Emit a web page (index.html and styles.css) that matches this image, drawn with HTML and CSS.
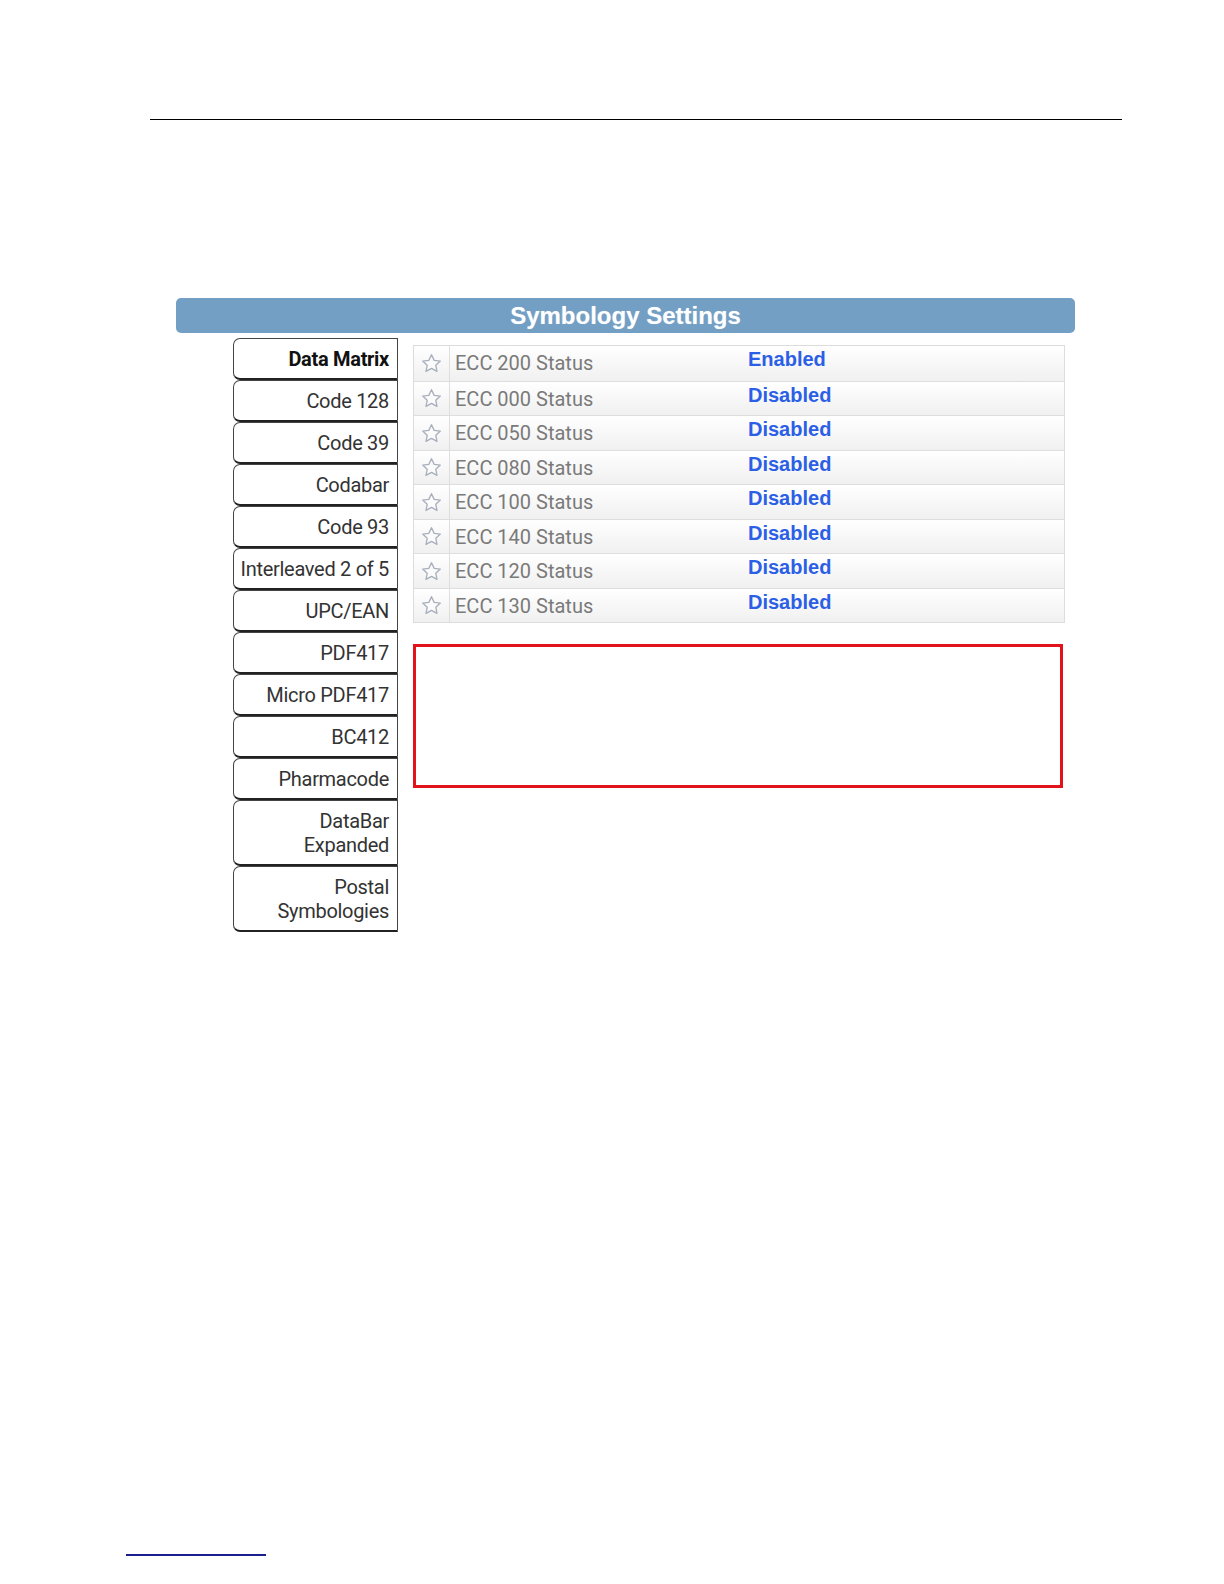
FILE: index.html
```html
<!DOCTYPE html>
<html>
<head>
<meta charset="utf-8">
<title>Symbology Settings</title>
<link rel="stylesheet" href="styles.css">
</head>
<body>
<div class="page">
  <div class="top-rule"></div>
  <section class="panel">
    <div class="header">Symbology Settings</div>
    <div class="panel-body">
      <nav class="tabs">
        <div class="tab active">Data Matrix</div>
        <div class="tab">Code 128</div>
        <div class="tab">Code 39</div>
        <div class="tab">Codabar</div>
        <div class="tab">Code 93</div>
        <div class="tab">Interleaved 2 of 5</div>
        <div class="tab">UPC/EAN</div>
        <div class="tab">PDF417</div>
        <div class="tab">Micro PDF417</div>
        <div class="tab">BC412</div>
        <div class="tab">Pharmacode</div>
        <div class="tab tall">DataBar<br>Expanded</div>
        <div class="tab tall">Postal<br>Symbologies</div>
      </nav>
      <div class="content">
        <div class="settings">
          <div class="row"><div class="star"><svg viewBox="0 0 24 24"><path d="M12 2.8l2.8 5.9 6.4.8-4.7 4.4 1.2 6.4L12 17.1l-5.7 3.2 1.2-6.4-4.7-4.4 6.4-.8z"/></svg></div><div class="label">ECC 200 Status</div><div class="value">Enabled</div></div>
          <div class="row"><div class="star"><svg viewBox="0 0 24 24"><path d="M12 2.8l2.8 5.9 6.4.8-4.7 4.4 1.2 6.4L12 17.1l-5.7 3.2 1.2-6.4-4.7-4.4 6.4-.8z"/></svg></div><div class="label">ECC 000 Status</div><div class="value">Disabled</div></div>
          <div class="row"><div class="star"><svg viewBox="0 0 24 24"><path d="M12 2.8l2.8 5.9 6.4.8-4.7 4.4 1.2 6.4L12 17.1l-5.7 3.2 1.2-6.4-4.7-4.4 6.4-.8z"/></svg></div><div class="label">ECC 050 Status</div><div class="value">Disabled</div></div>
          <div class="row"><div class="star"><svg viewBox="0 0 24 24"><path d="M12 2.8l2.8 5.9 6.4.8-4.7 4.4 1.2 6.4L12 17.1l-5.7 3.2 1.2-6.4-4.7-4.4 6.4-.8z"/></svg></div><div class="label">ECC 080 Status</div><div class="value">Disabled</div></div>
          <div class="row"><div class="star"><svg viewBox="0 0 24 24"><path d="M12 2.8l2.8 5.9 6.4.8-4.7 4.4 1.2 6.4L12 17.1l-5.7 3.2 1.2-6.4-4.7-4.4 6.4-.8z"/></svg></div><div class="label">ECC 100 Status</div><div class="value">Disabled</div></div>
          <div class="row"><div class="star"><svg viewBox="0 0 24 24"><path d="M12 2.8l2.8 5.9 6.4.8-4.7 4.4 1.2 6.4L12 17.1l-5.7 3.2 1.2-6.4-4.7-4.4 6.4-.8z"/></svg></div><div class="label">ECC 140 Status</div><div class="value">Disabled</div></div>
          <div class="row"><div class="star"><svg viewBox="0 0 24 24"><path d="M12 2.8l2.8 5.9 6.4.8-4.7 4.4 1.2 6.4L12 17.1l-5.7 3.2 1.2-6.4-4.7-4.4 6.4-.8z"/></svg></div><div class="label">ECC 120 Status</div><div class="value">Disabled</div></div>
          <div class="row"><div class="star"><svg viewBox="0 0 24 24"><path d="M12 2.8l2.8 5.9 6.4.8-4.7 4.4 1.2 6.4L12 17.1l-5.7 3.2 1.2-6.4-4.7-4.4 6.4-.8z"/></svg></div><div class="label">ECC 130 Status</div><div class="value">Disabled</div></div>
        </div>
        <div class="highlight-box"></div>
      </div>
    </div>
  </section>
  <div class="footer-rule"></div>
</div>
</body>
</html>
```

FILE: styles.css
```css
* { box-sizing: border-box; }

html, body {
  margin: 0;
  padding: 0;
  overflow: hidden;
}

body {
  background: #fff;
  font-family: Roboto, "Liberation Sans", Arial, sans-serif;
}

.page {
  padding-top: 119px;
}

.top-rule {
  margin-left: 150px;
  width: 972px;
  height: 1px;
  background: #000;
}

.panel {
  margin-top: 178px;
  margin-left: 176px;
  width: 899px;
}

.header {
  height: 35px;
  line-height: 36px;
  background: #739fc4;
  border-radius: 5px;
  color: #fff;
  font-family: "Liberation Sans", Arial, sans-serif;
  font-weight: bold;
  font-size: 24px;
  text-align: center;
  text-shadow: 0 0 1px rgba(255,255,255,0.4);
}

.panel-body {
  display: flex;
  margin-top: 5px;
}

.tabs {
  margin-left: 57px;
  width: 165px;
  display: flex;
  flex-direction: column;
}

.tab {
  height: 42px;
  display: flex;
  align-items: center;
  justify-content: flex-end;
  padding-right: 8px;
  border: 1px solid #444;
  border-bottom: 2px solid #222;
  border-radius: 7px 0 0 7px;
  font-size: 20px;
  color: #333;
  text-align: right;
  line-height: 24px;
  letter-spacing: -0.3px;
  background: #fff;
}

.tab.active {
  font-weight: bold;
  color: #111;
}

.tab.tall {
  height: 66px;
}

.content {
  margin-left: 15px;
  width: 652px;
  margin-top: 7px;
}

.settings {
  border: 1px solid #dcdcdc;
}

.row {
  height: 34.5px;
  display: flex;
  align-items: stretch;
  background: linear-gradient(#ffffff, #f0f0f0);
  border-top: 1px solid #dedede;
}

.row:first-child { border-top: none; }

.star {
  width: 36px;
  border-right: 1px solid #dedede;
  display: flex;
  align-items: center;
  justify-content: center;
  padding-top: 1px;
}

.star svg {
  width: 23px;
  height: 23px;
  fill: #fbfbfc;
  stroke: #a8b0bc;
  stroke-width: 1.4;
  stroke-linejoin: round;
}

.label {
  width: 298px;
  padding-left: 5px;
  padding-top: 5px;
  font-size: 20px;
  color: #7a7a7a;
  line-height: 24px;
}

.value {
  padding-top: 1px;
  font-family: "Liberation Sans", Arial, sans-serif;
  font-weight: bold;
  font-size: 20px;
  line-height: 24px;
  color: #2b5fe6;
}

.highlight-box {
  margin-top: 21px;
  width: 650px;
  height: 144px;
  border: 3px solid #e3121b;
}

.footer-rule {
  margin-top: 622px;
  margin-left: 126px;
  width: 140px;
  height: 2px;
  background: #1a1f8c;
}
```
